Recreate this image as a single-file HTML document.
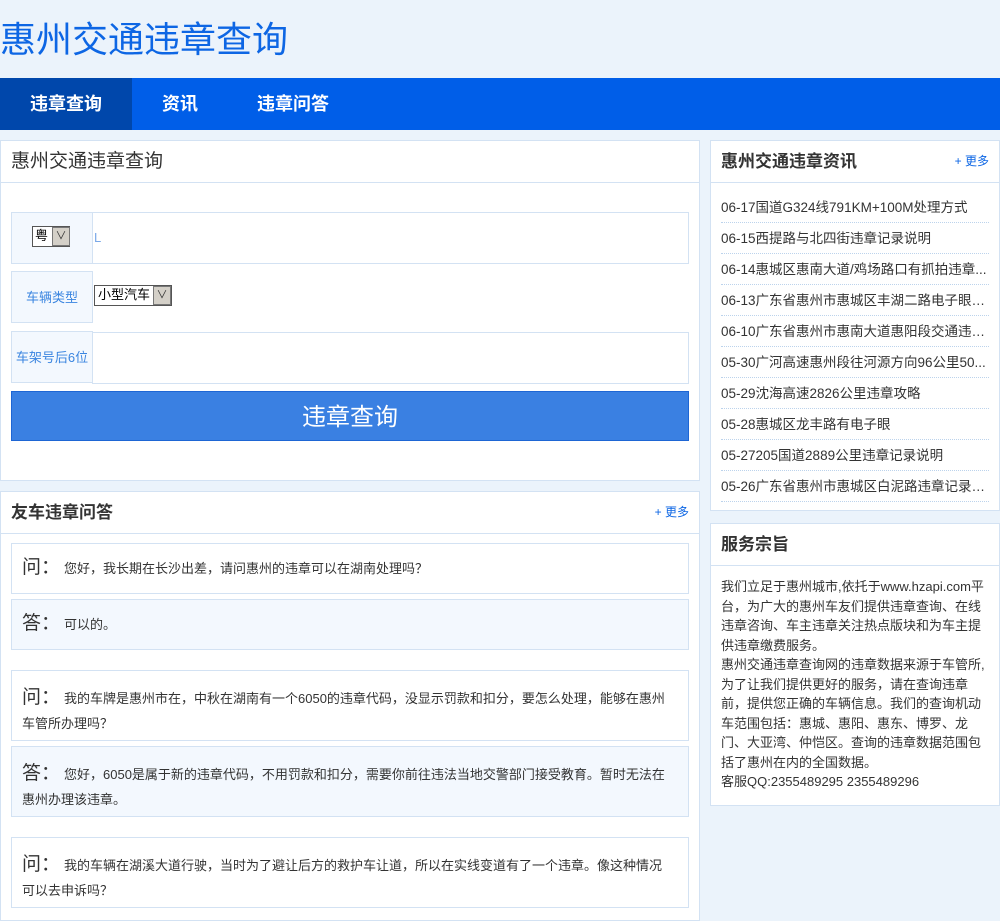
<!DOCTYPE html>
<html><head><meta charset="utf-8"><style>
*{margin:0;padding:0;box-sizing:border-box}
body{width:1000px;height:909px;overflow:hidden;background:#ebf3fb;font-family:"Liberation Sans","Noto Sans CJK SC",sans-serif;position:relative;color:#333}
.a{position:absolute}
.t{left:0;top:16px;font-size:36px;color:#0d66e4;line-height:48px}
.nav{left:0;top:78px;width:1000px;height:52px;background:#005ee8}
.nav div{position:absolute;top:0;height:52px;line-height:52px;color:#fff;font-size:18px;font-weight:bold;text-align:center}
.p{background:#fff;border:1px solid #d3e2f3}
.ph{position:absolute;left:0;right:0;top:0;height:42px;border-bottom:1px solid #d3e2f3;line-height:41px;padding-left:10px;font-size:17px;font-weight:bold;color:#333}
.more{position:absolute;right:10px;top:0;font-size:12px;color:#0d66e4;font-weight:normal}
.lab{background:#f3f8fe;border:1px solid #d3e2f3;color:#3a85e0;font-size:13px;text-align:center}
.inp{border:1px solid #d3e2f3;background:#fff}
.sel{border:1px solid #555;background:#fff;font-size:13px;color:#000;height:20px;line-height:18px}
.q{left:11px;width:678px;border:1px solid #d3e2f3;font-size:13px;line-height:27px;padding:10px 19px 0 10px;color:#333}
.q span{font-size:19px;margin-right:4px}
.ans{background:#f3f8fe}
.li{left:721px;width:268px;height:31px;border-bottom:1px dotted #bcd3ec;font-size:13.5px;line-height:32px;color:#333;white-space:nowrap;overflow:hidden;text-overflow:ellipsis}
</style></head><body>
<div class="a t">惠州交通违章查询</div>
<div class="a nav"><div style="left:0;width:132px;background:#0047ab">违章查询</div><div style="left:132px;width:96px">资讯</div><div style="left:228px;width:130px">违章问答</div></div>

<div class="a p" style="left:0;top:140px;width:700px;height:341px">
<div class="ph" style="font-weight:normal;font-size:19px">惠州交通违章查询</div>
</div>
<div class="a lab" style="left:11px;top:212px;width:82px;height:52px"></div>
<div class="a sel" style="left:32px;top:226px;width:38px;height:21px"><span style="padding-left:2px">粤</span></div>
<div class="a" style="left:52px;top:227px;width:18px;height:19px;background:#d4d0c8;border:1px solid #777;font-size:11px;text-align:center;line-height:17px">∨</div>
<div class="a inp" style="left:92px;top:212px;width:597px;height:52px;color:#7aa8e8;font-size:13px;line-height:50px;padding-left:1px">L</div>
<div class="a lab" style="left:11px;top:271px;width:82px;height:52px;line-height:52px">车辆类型</div>
<div class="a sel" style="left:94px;top:285px;width:78px;height:21px;padding-left:3px">小型汽车</div>
<div class="a" style="left:153px;top:286px;width:18px;height:19px;background:#d4d0c8;border:1px solid #777;font-size:11px;text-align:center;line-height:17px">∨</div>
<div class="a lab" style="left:11px;top:331px;width:82px;height:52px;line-height:52px;font-size:13px">车架号后6位</div>
<div class="a inp" style="left:92px;top:332px;width:597px;height:52px"></div>
<div class="a" style="left:11px;top:391px;width:678px;height:50px;background:#3a80e2;border:1px solid #1e66d4;color:#fff;font-size:24px;text-align:center;line-height:52px">违章查询</div>

<div class="a p" style="left:0;top:491px;width:700px;height:430px">
<div class="ph">友车违章问答<span class="more">+ 更多</span></div>
</div>
<div class="a q" style="top:543px;height:51px"><span>问：</span>您好，我长期在长沙出差，请问惠州的违章可以在湖南处理吗？</div>
<div class="a q ans" style="top:599px;height:51px"><span>答：</span>可以的。</div>
<div class="a q" style="top:670px;height:71px;line-height:25px;padding-top:14px"><span>问：</span>我的车牌是惠州市在，中秋在湖南有一个6050的违章代码，没显示罚款和扣分，要怎么处理，能够在惠州车管所办理吗？</div>
<div class="a q ans" style="top:746px;height:71px;line-height:25px;padding-top:14px"><span>答：</span>您好，6050是属于新的违章代码，不用罚款和扣分，需要你前往违法当地交警部门接受教育。暂时无法在惠州办理该违章。</div>
<div class="a q" style="top:837px;height:71px;line-height:25px;padding-top:14px"><span>问：</span>我的车辆在湖溪大道行驶，当时为了避让后方的救护车让道，所以在实线变道有了一个违章。像这种情况可以去申诉吗？</div>

<div class="a p" style="left:710px;top:140px;width:290px;height:371px">
<div class="ph">惠州交通违章资讯<span class="more">+ 更多</span></div>
</div>
<div class="a li" style="top:192px">06-17国道G324线791KM+100M处理方式</div>
<div class="a li" style="top:223px">06-15西提路与北四街违章记录说明</div>
<div class="a li" style="top:254px">06-14惠城区惠南大道/鸡场路口有抓拍违章...</div>
<div class="a li" style="top:285px">06-13广东省惠州市惠城区丰湖二路电子眼解...</div>
<div class="a li" style="top:316px">06-10广东省惠州市惠南大道惠阳段交通违章...</div>
<div class="a li" style="top:347px">05-30广河高速惠州段往河源方向96公里50...</div>
<div class="a li" style="top:378px">05-29沈海高速2826公里违章攻略</div>
<div class="a li" style="top:409px">05-28惠城区龙丰路有电子眼</div>
<div class="a li" style="top:440px">05-27205国道2889公里违章记录说明</div>
<div class="a li" style="top:471px">05-26广东省惠州市惠城区白泥路违章记录说...</div>

<div class="a p" style="left:710px;top:523px;width:290px;height:283px">
<div class="ph">服务宗旨</div>
<div class="a" style="left:10px;top:53px;width:272px;font-size:13px;line-height:19.5px;color:#333">我们立足于惠州城市,依托于www.hzapi.com平台，为广大的惠州车友们提供违章查询、在线违章咨询、车主违章关注热点版块和为车主提供违章缴费服务。<br>惠州交通违章查询网的违章数据来源于车管所,为了让我们提供更好的服务，请在查询违章前，提供您正确的车辆信息。我们的查询机动车范围包括：惠城、惠阳、惠东、博罗、龙门、大亚湾、仲恺区。查询的违章数据范围包括了惠州在内的全国数据。<br>客服QQ:2355489295 2355489296</div>
</div>
</body></html>
